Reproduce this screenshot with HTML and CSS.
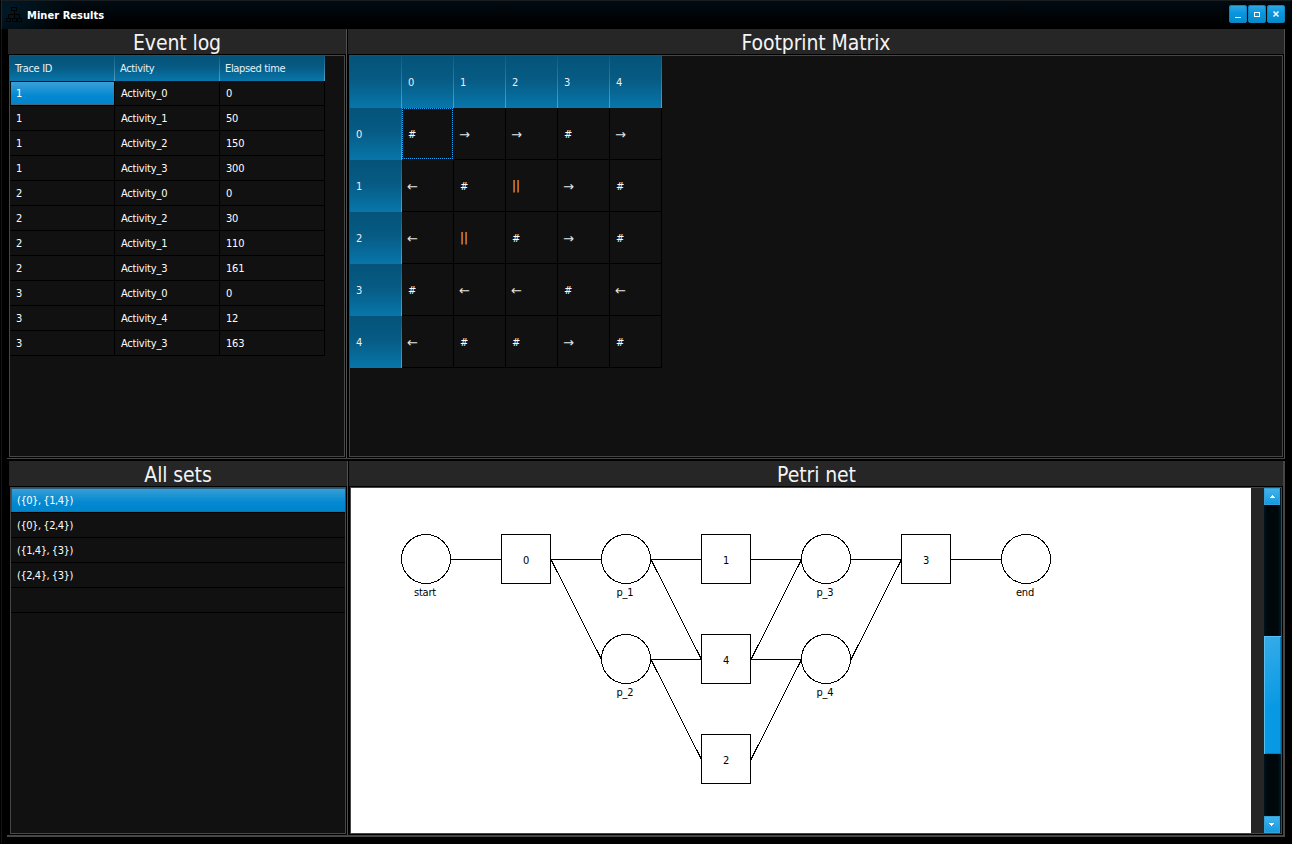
FILE: index.html
```html
<!DOCTYPE html>
<html lang="en">
<head>
<meta charset="utf-8">
<title>Miner Results</title>
<link rel="stylesheet" href="styles.css">
</head>
<body>
<div class="window">
  <header class="titlebar">
    <svg class="app-icon" width="16" height="16" viewBox="0 0 16 16" shape-rendering="crispEdges"><path d="M5.500 .5h5v3h-5zM8 4v3M2.500 11V7.500h11V11M8 7v4M.5 11.500h4v3h-4zM6 11.500h4v3H6zM11.500 11.500h4v3h-4z"/></svg>
    <h1 class="title">Miner Results</h1>
    <div class="controls">
      <span class="control"><svg width="18" height="18" shape-rendering="crispEdges"><path d="M6 12h6v1H6z"/></svg></span>
      <span class="control"><svg width="18" height="18" shape-rendering="crispEdges"><path fill-rule="evenodd" d="M6 7h6v5H6zM7 8v3h4V8z"/></svg></span>
      <span class="control"><svg width="18" height="18"><path class="cross" d="M6.500 6.500l5 5M11.500 6.500l-5 5"/></svg></span>
    </div>
  </header>
  <main class="content">
    <div class="row row-top">
      <section class="panel log">
        <h2 class="heading">Event log</h2>
        <div class="body">
          <div class="log-table" id="log"></div>
        </div>
      </section>
      <section class="panel footprint">
        <h2 class="heading">Footprint Matrix</h2>
        <div class="body">
          <div class="matrix" id="matrix"></div>
        </div>
      </section>
    </div>
    <div class="row row-bottom">
      <section class="panel sets">
        <h2 class="heading">All sets</h2>
        <div class="body">
          <ul class="set-list">
            <li class="selected">({0}, {1,4})</li>
            <li>({0}, {2,4})</li>
            <li>({1,4}, {3})</li>
            <li>({2,4}, {3})</li>
            <li></li>
          </ul>
        </div>
      </section>
      <section class="panel petri">
        <h2 class="heading">Petri net</h2>
        <div class="body petri-body">
          <svg class="net" id="net" width="900" height="345" viewBox="0 0 900 345"></svg>
          <div class="scrollbar">
            <span class="arrow"><svg width="16" height="17" shape-rendering="crispEdges"><path d="M8 7h1v1h1v1h1v1H6V9h1V8h1z"/></svg></span>
            <span class="thumb"></span>
            <span class="arrow"><svg width="16" height="17" shape-rendering="crispEdges"><path d="M5 7h5v1H9v1H8v1H7V9H6V8H5z"/></svg></span>
          </div>
        </div>
      </section>
    </div>
  </main>
</div>
<script src="app.js"></script>
</body>
</html>
```
FILE: styles.css
```css
* { box-sizing: border-box; }
body {
  margin: 0;
  background: #000;
  color: #fff;
  font: 11px/13px "DejaVu Sans Condensed", "DejaVu Sans", sans-serif;
  letter-spacing: -0.2px;
}
h1, h2, ul { margin: 0; padding: 0; font-weight: normal; }
.window {
  width: 1292px;
  height: 844px;
  display: flex;
  flex-direction: column;
  border: 1px solid #000;
  border-top-color: #1a1e20;
  background: #000;
  box-shadow: inset 1px 0 #001c2c;
}
.titlebar {
  height: 28px;
  display: flex;
  align-items: center;
  padding: 0 6px 2px 6px;
  background: radial-gradient(ellipse 70px 40px at 0 10px, #011a28, transparent), linear-gradient(#010b12, #000 85%);
  border-left: 1px solid #033149;
}
.app-icon { fill: none; stroke: #000; margin: 2px 5px 0 -2px; }
.title { font-weight: bold; font-size: 11px; line-height: 13px; letter-spacing: 0.05px; padding-top: 2px; }
.controls { display: flex; gap: 1px; margin-left: auto; }
.control {
  width: 18px;
  height: 18px;
  border-radius: 3px;
  background: linear-gradient(#35a9e2, #0796df 45%, #0588ca);
  box-shadow: inset 0 0 0 1px #1083bf;
}
.control svg, .arrow svg { display: block; fill: #fff; }
.cross { stroke: #e8f6ff; stroke-width: 1.7; }
.content { flex: 1; padding: 0 6px 6px 6px; display: flex; flex-direction: column; }
.row { display: flex; }
.row-top { height: 430px; border-bottom: 1px solid #464646; padding-left: 1px; }
.row-bottom { height: 378px; padding: 2px 0 0 2px; border-bottom: 2px solid #464646; }
.panel { display: flex; flex-direction: column; border-right: 1px solid #505050; }
.log { width: 339px; margin-right: 1px; }
.sets { width: 339px; margin-right: 1px; }
.footprint { width: 937px; }
.petri { width: 936px; border-right: 2px solid #464646; }
.heading {
  height: 25px;
  background: #262626;
  color: #f4f4f4;
  font-size: 21px;
  line-height: 29px;
  text-align: center;
  letter-spacing: -0.1px;
  margin-bottom: 1px;
}
.petri .heading { padding-left: 1px; }
.body {
  flex: 1;
  margin: 0 1px 1px;
  border: 1px solid #464646;
  background: #111;
}
.log-table { display: grid; grid-template-columns: repeat(3, 105px); grid-auto-rows: 25px; width: 315px; }
.cell { border: solid #000; border-width: 0 1px 1px 0; display: flex; align-items: center; padding-left: 6px; }
.head {
  padding-left: 5px;
  color: #e8f0f4;
  letter-spacing: -0.35px;
  background: linear-gradient(#055379, #065b84 45%, #0876ab);
  border-image: linear-gradient(#075b84, #5ba0c2) 1;
  border-width: 0 1px 0 0;
}
.log .selected {
  padding-left: 5px;
  border-width: 1px;
  border-color: #111 #000 #000 #111;
  background: linear-gradient(#3a9fd6, #0389d2 60%, #0083c9) padding-box;
  box-shadow: inset 0 -1px #456478;
}
.matrix { display: grid; grid-template-columns: repeat(6, 52px); grid-auto-rows: 52px; width: 312px; }
.matrix .cell { padding: 2px 0 0 6px; }
.matrix .cell.head { padding: 0 0 0 6px; }
.matrix .cell.focus { border: 1px dotted #1aa6f0; padding-left: 5px; margin: 0 1px 1px 0; box-shadow: 1px 1px #000; }
.matrix .arrow-sign { font-family: "DejaVu Sans", sans-serif; font-size: 13px; color: #e4e4e4; padding-left: 5px; }
.matrix .parallel { color: #d9a05c; font-weight: bold; letter-spacing: 0; font-size: 12px; padding-top: 1px; }
.set-list { list-style: none; }
.set-list li { height: 25px; line-height: 23px; padding: 1px 0 0 6px; border-bottom: 1px solid #000; letter-spacing: -0.45px; }
.set-list .selected {
  background: linear-gradient(#3a9fd6, #0389d2 60%, #0083c9);
  box-shadow: inset 1px 1px #285b78, inset 0 -1px #456478;
}
.petri-body { display: flex; background: #262626; }
.net { display: block; background: #fff; }
.net .shape { fill: none; stroke: #000; shape-rendering: crispEdges; }
.net text { fill: #000; text-anchor: middle; }
.scrollbar {
  width: 17px;
  margin-left: 13px;
  display: flex;
  flex-direction: column;
  justify-content: space-between;
  background: linear-gradient(90deg, #00141f, #00080b 20%, #00080b 80%, #001c2b);
}
.arrow { height: 17px; width: 16px; background: linear-gradient(#45b4ec, #1298de); box-shadow: inset 0 0 0 1px #35a0d5; }
.thumb {
  width: 17px;
  height: 118px;
  margin-top: 114px;
  background: linear-gradient(160deg, #36ace9, #0899e4 60%);
  box-shadow: inset 1px 1px #5bbef0, inset -1px -1px #087bb8;
  margin-bottom: 45px;
}
```
FILE: app.js
```js
const log = document.getElementById('log');
const matrix = document.getElementById('matrix');

function addCell(parent, text, cls) {
  const el = document.createElement('div');
  el.className = 'cell ' + (cls || '');
  el.textContent = text;
  parent.appendChild(el);
}

['Trace ID', 'Activity', 'Elapsed time'].forEach(t => addCell(log, t, 'head'));
[[1, 0, 0], [1, 1, 50], [1, 2, 150], [1, 3, 300], [2, 0, 0], [2, 2, 30],
 [2, 1, 110], [2, 3, 161], [3, 0, 0], [3, 4, 12], [3, 3, 163]].forEach(([id, act, time], i) => {
  addCell(log, id, i === 0 ? 'selected' : '');
  addCell(log, 'Activity_' + act);
  addCell(log, time);
});

['', 0, 1, 2, 3, 4].forEach(t => addCell(matrix, t, 'head'));
['#→→#→', '←#‖→#', '←‖#→#', '#←←#←', '←##→#'].forEach((line, r) => {
  addCell(matrix, r, 'head');
  [...line].forEach((c, i) => {
    if (c === '‖') addCell(matrix, '||', 'parallel');
    else if (c !== '#') addCell(matrix, c, 'arrow-sign');
    else addCell(matrix, c, r + i === 0 ? 'focus' : '');
  });
});

// Nodes are 50px boxes on a 100px grid: [label, column, row]
const places = [['start', 0, 0], ['p_1', 2, 0], ['p_3', 4, 0], ['end', 6, 0], ['p_2', 2, 1], ['p_4', 4, 1]];
const transitions = [['0', 1, 0], ['1', 3, 0], ['3', 5, 0], ['4', 3, 1], ['2', 3, 2]];
const arcs = [[0, 0, 0], [1, 0, 0], [1, 0, 1], [2, 0, 0], [2, 0, 1], [3, 0, 0], [4, 0, 0], [5, 0, 0],
  [2, 1, 1], [2, 1, 2], [3, 1, 0], [3, 1, 1], [3, 2, 1], [4, 1, 0]];
let svg = '';
arcs.forEach(([c, a, b]) => {
  svg += `<path class="shape" d="M${c * 100 + 100} ${a * 100 + 71.5}L${c * 100 + 150.5} ${b * 100 + 71.5}"/>`;
});
places.forEach(([t, c, r]) => {
  svg += `<circle class="shape" cx="${c * 100 + 75}" cy="${r * 100 + 71}" r="24.5"/><text x="${c * 100 + 74}" y="${r * 100 + 108}">${t}</text>`;
});
transitions.forEach(([t, c, r]) => {
  svg += `<rect class="shape" x="${c * 100 + 50.5}" y="${r * 100 + 46.5}" width="49" height="49"/><text x="${c * 100 + 75}" y="${r * 100 + 76}">${t}</text>`;
});
document.getElementById('net').innerHTML = svg;
```
